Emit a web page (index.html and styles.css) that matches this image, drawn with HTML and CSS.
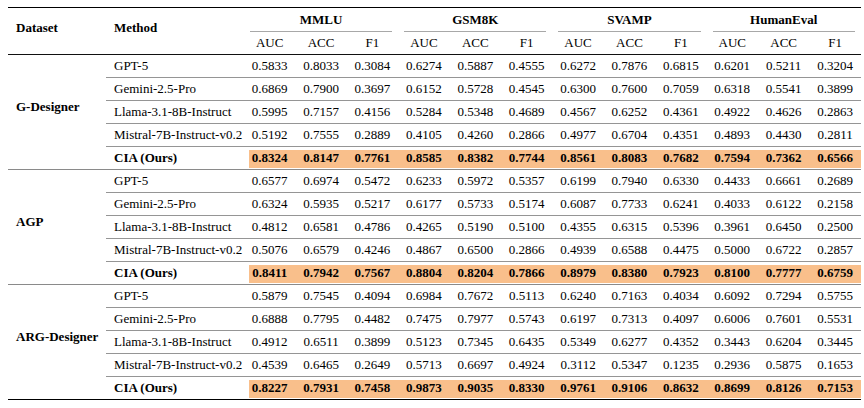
FILE: index.html
```html
<!DOCTYPE html>
<html lang="en">
<head>
<meta charset="utf-8">
<title>Results table</title>
<link rel="stylesheet" href="styles.css">
</head>
<body>
<table class="results">
  <colgroup>
    <col class="c-ds"><col class="c-method">
    <col class="c-num"><col class="c-num"><col class="c-num">
    <col class="c-num"><col class="c-num"><col class="c-num">
    <col class="c-num"><col class="c-num"><col class="c-num">
    <col class="c-num"><col class="c-num"><col class="c-num">
  </colgroup>
  <thead>
    <tr class="h1">
      <th class="ds-head" rowspan="2">Dataset</th>
      <th class="method-head" rowspan="2">Method</th>
      <th class="grp" colspan="3"><div class="grp-label">MMLU</div></th>
      <th class="grp" colspan="3"><div class="grp-label">GSM8K</div></th>
      <th class="grp" colspan="3"><div class="grp-label">SVAMP</div></th>
      <th class="grp" colspan="3"><div class="grp-label">HumanEval</div></th>
    </tr>
    <tr class="h2">
      <th class="sub">AUC</th><th class="sub">ACC</th><th class="sub">F1</th>
      <th class="sub">AUC</th><th class="sub">ACC</th><th class="sub">F1</th>
      <th class="sub">AUC</th><th class="sub">ACC</th><th class="sub">F1</th>
      <th class="sub">AUC</th><th class="sub">ACC</th><th class="sub">F1</th>
    </tr>
  </thead>
  <tbody class="group">
    <tr><td class="ds" rowspan="5">G-Designer</td><td class="m">GPT-5</td>
      <td>0.5833</td><td>0.8033</td><td>0.3084</td><td>0.6274</td><td>0.5887</td><td>0.4555</td><td>0.6272</td><td>0.7876</td><td>0.6815</td><td>0.6201</td><td>0.5211</td><td>0.3204</td></tr>
    <tr><td class="m">Gemini-2.5-Pro</td>
      <td>0.6869</td><td>0.7900</td><td>0.3697</td><td>0.6152</td><td>0.5728</td><td>0.4545</td><td>0.6300</td><td>0.7600</td><td>0.7059</td><td>0.6318</td><td>0.5541</td><td>0.3899</td></tr>
    <tr><td class="m">Llama-3.1-8B-Instruct</td>
      <td>0.5995</td><td>0.7157</td><td>0.4156</td><td>0.5284</td><td>0.5348</td><td>0.4689</td><td>0.4567</td><td>0.6252</td><td>0.4361</td><td>0.4922</td><td>0.4626</td><td>0.2863</td></tr>
    <tr><td class="m">Mistral-7B-Instruct-v0.2</td>
      <td>0.5192</td><td>0.7555</td><td>0.2889</td><td>0.4105</td><td>0.4260</td><td>0.2866</td><td>0.4977</td><td>0.6704</td><td>0.4351</td><td>0.4893</td><td>0.4430</td><td>0.2811</td></tr>
    <tr class="ours"><td class="m">CIA (Ours)</td>
      <td class="hl">0.8324</td><td class="hl">0.8147</td><td class="hl">0.7761</td><td class="hl">0.8585</td><td class="hl">0.8382</td><td class="hl">0.7744</td><td class="hl">0.8561</td><td class="hl">0.8083</td><td class="hl">0.7682</td><td class="hl">0.7594</td><td class="hl">0.7362</td><td class="hl">0.6566</td></tr>
  </tbody>
  <tbody class="group">
    <tr><td class="ds" rowspan="5">AGP</td><td class="m">GPT-5</td>
      <td>0.6577</td><td>0.6974</td><td>0.5472</td><td>0.6233</td><td>0.5972</td><td>0.5357</td><td>0.6199</td><td>0.7940</td><td>0.6330</td><td>0.4433</td><td>0.6661</td><td>0.2689</td></tr>
    <tr><td class="m">Gemini-2.5-Pro</td>
      <td>0.6324</td><td>0.5935</td><td>0.5217</td><td>0.6177</td><td>0.5733</td><td>0.5174</td><td>0.6087</td><td>0.7733</td><td>0.6241</td><td>0.4033</td><td>0.6122</td><td>0.2158</td></tr>
    <tr><td class="m">Llama-3.1-8B-Instruct</td>
      <td>0.4812</td><td>0.6581</td><td>0.4786</td><td>0.4265</td><td>0.5190</td><td>0.5100</td><td>0.4355</td><td>0.6315</td><td>0.5396</td><td>0.3961</td><td>0.6450</td><td>0.2500</td></tr>
    <tr><td class="m">Mistral-7B-Instruct-v0.2</td>
      <td>0.5076</td><td>0.6579</td><td>0.4246</td><td>0.4867</td><td>0.6500</td><td>0.2866</td><td>0.4939</td><td>0.6588</td><td>0.4475</td><td>0.5000</td><td>0.6722</td><td>0.2857</td></tr>
    <tr class="ours"><td class="m">CIA (Ours)</td>
      <td class="hl">0.8411</td><td class="hl">0.7942</td><td class="hl">0.7567</td><td class="hl">0.8804</td><td class="hl">0.8204</td><td class="hl">0.7866</td><td class="hl">0.8979</td><td class="hl">0.8380</td><td class="hl">0.7923</td><td class="hl">0.8100</td><td class="hl">0.7777</td><td class="hl">0.6759</td></tr>
  </tbody>
  <tbody class="group last">
    <tr><td class="ds" rowspan="5">ARG-Designer</td><td class="m">GPT-5</td>
      <td>0.5879</td><td>0.7545</td><td>0.4094</td><td>0.6984</td><td>0.7672</td><td>0.5113</td><td>0.6240</td><td>0.7163</td><td>0.4034</td><td>0.6092</td><td>0.7294</td><td>0.5755</td></tr>
    <tr><td class="m">Gemini-2.5-Pro</td>
      <td>0.6888</td><td>0.7795</td><td>0.4482</td><td>0.7475</td><td>0.7977</td><td>0.5743</td><td>0.6197</td><td>0.7313</td><td>0.4097</td><td>0.6006</td><td>0.7601</td><td>0.5531</td></tr>
    <tr><td class="m">Llama-3.1-8B-Instruct</td>
      <td>0.4912</td><td>0.6511</td><td>0.3899</td><td>0.5123</td><td>0.7345</td><td>0.6435</td><td>0.5349</td><td>0.6277</td><td>0.4352</td><td>0.3443</td><td>0.6204</td><td>0.3445</td></tr>
    <tr><td class="m">Mistral-7B-Instruct-v0.2</td>
      <td>0.4539</td><td>0.6465</td><td>0.2649</td><td>0.5713</td><td>0.6697</td><td>0.4924</td><td>0.3112</td><td>0.5347</td><td>0.1235</td><td>0.2936</td><td>0.5875</td><td>0.1653</td></tr>
    <tr class="ours"><td class="m">CIA (Ours)</td>
      <td class="hl">0.8227</td><td class="hl">0.7931</td><td class="hl">0.7458</td><td class="hl">0.9873</td><td class="hl">0.9035</td><td class="hl">0.8330</td><td class="hl">0.9761</td><td class="hl">0.9106</td><td class="hl">0.8632</td><td class="hl">0.8699</td><td class="hl">0.8126</td><td class="hl">0.7153</td></tr>
  </tbody>
</table>
</body>
</html>
```

FILE: styles.css
```css
html, body {
  margin: 0;
  padding: 0;
  background: #ffffff;
}

body {
  padding: 7px 0 0 8px;
  font-family: "Liberation Serif", "Times New Roman", serif;
  font-size: 13px;
  color: #000;
}

.results {
  table-layout: fixed;
  width: 852.8px;
  border-collapse: separate;
  border-spacing: 0;
  border-top: 1px solid #000;
  border-bottom: 1px solid #000;
}

.c-ds { width: 98px; }
.c-method { width: 138px; }
.c-num { width: 51.4px; }

th, td {
  padding: 0;
  line-height: 16px;
  white-space: nowrap;
}

/* header */
.h1 th { height: 24px; }
.h2 th { height: 22px; }

.ds-head, .method-head {
  text-align: left;
  vertical-align: middle;
  padding: 0 0 6px 8px;
  font-weight: bold;
  border-bottom: 1px solid #111;
}

.grp {
  vertical-align: bottom;
  font-weight: bold;
}

.grp-label {
  margin: 0 6px;
  padding-bottom: 3px;
  border-bottom: 1px solid #a8a8a8;
}

.sub {
  font-weight: normal;
  text-align: center;
  vertical-align: middle;
  border-bottom: 1px solid #111;
}

/* body */
tbody td {
  height: 22px;
  text-align: center;
  vertical-align: middle;
  border-bottom: 1px solid #959595;
}

tbody td.m {
  text-align: left;
  padding-left: 8px;
}

tbody td.ds {
  text-align: left;
  padding: 0 0 11px 8px;
  font-weight: bold;
  border-bottom: 1px solid #8a8a8a;
}

.group .ours td {
  font-weight: bold;
  border-bottom: 1px solid #8a8a8a;
}

.group.last .ours td,
.group.last td.ds {
  border-bottom: none;
}

td.hl {
  background-image: linear-gradient(#f9bf8b, #f9bf8b);
  background-repeat: no-repeat;
  background-size: 100% 18px;
  background-position: 0 3px;
}

td.m + td.hl {
  background-size: calc(100% - 5px) 18px;
  background-position: 5px 3px;
}
```
